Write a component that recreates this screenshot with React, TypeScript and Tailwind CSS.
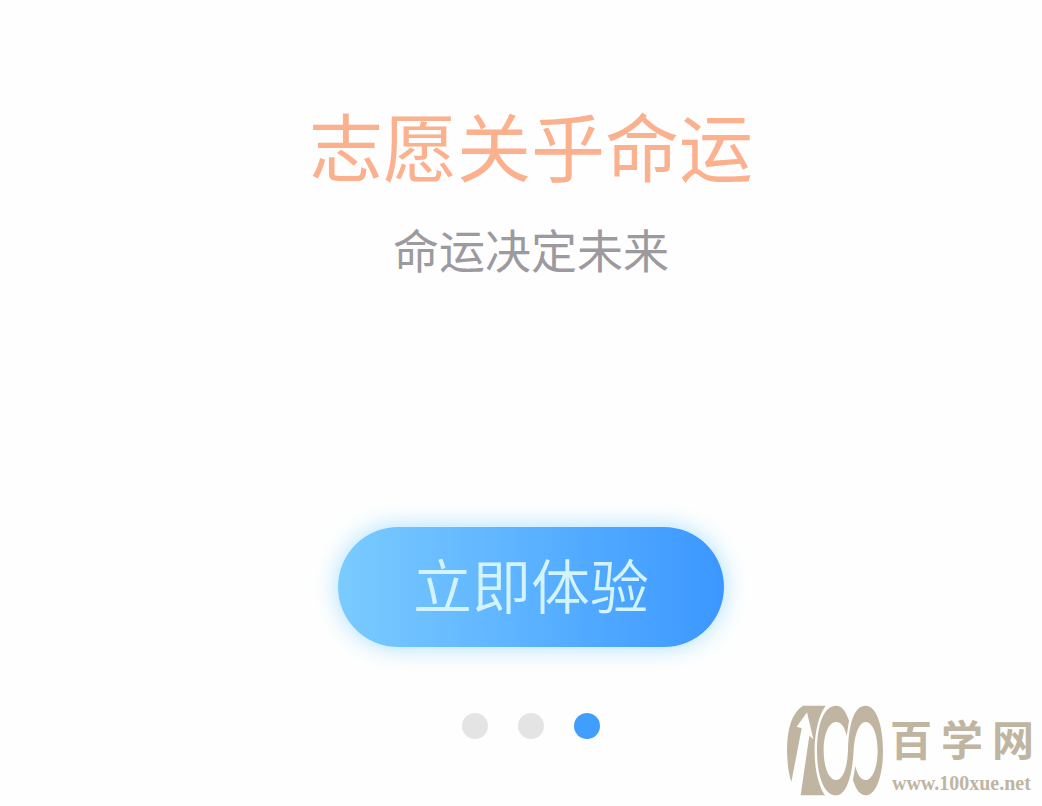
import React from "react";

const slides = ["第一页", "第二页", "第三页"];

function BrandMark(): JSX.Element {
  return (
    <svg
      className="shrink-0"
      width="96"
      height="91"
      viewBox="36 29 288 273"
      aria-hidden="true"
    >
      <g fill="#bfb5a1">
        <path d="M84 31 Q36 62 36 165 Q37 225 49 260 L80 99 L65 94 L96 51 L115 132 L103 121 L77 300 H150 C108 240 108 90 152 31 Z" />
        <path d="M183 31 C146 31 126 90 126 165 C126 240 146 300 183 300 C215 300 232 240 236 165 C239 118 252 80 272 80 C293 80 308 118 308 165 C308 215 293 254 272 254 C257 254 247 238 241 212 L234 254 C243 284 256 300 272 300 C304 300 324 240 324 165 C324 90 304 31 272 31 C240 31 222 76 219 165 C217 215 205 254 183 254 C161 254 146 215 146 165 C146 118 161 80 183 80 C200 80 210 98 215 122 L222 76 C212 46 200 31 183 31 Z" />
      </g>
    </svg>
  );
}

function Watermark(): JSX.Element {
  return (
    <a
      href="#home"
      className="absolute right-[8px] bottom-[10px] flex items-center gap-[7px] text-[#bfb5a1]"
    >
      <BrandMark />
      <span className="flex flex-col">
        <span className="flex gap-[9px] font-['Noto_Sans_CJK_SC',sans-serif] text-[42px] leading-[64px] font-bold">
          <span>百</span>
          <span>学</span>
          <span>网</span>
        </span>
        <span className="pl-[2px] font-['Liberation_Serif',serif] text-[20px] leading-[26px] font-bold">
          www.100xue.net
        </span>
      </span>
    </a>
  );
}

function App(): JSX.Element {
  const [current, setCurrent] = React.useState(2);

  return (
    <main className="relative flex min-h-screen flex-col items-center bg-[#fefefe] pt-[94px] pl-[20px] font-['Noto_Sans_CJK_SC',sans-serif]">
      <h1 className="text-[74px] leading-[100px] font-normal text-[#fbb08e]">
        志愿关乎命运
      </h1>
      <p className="mt-[22px] text-[46px] leading-[64px] text-[#9c9a9e]">
        命运决定未来
      </p>
      <button
        type="button"
        className="mt-[247px] h-[120px] rounded-full bg-linear-to-r from-[#7acbff] to-[#3b97ff] px-[75px] pb-[6px] text-[59px] leading-[114px] font-[350] text-[#d3f3ff] shadow-[0_0_24px_#a9e0ff]"
      >
        立即体验
      </button>
      <div className="mt-[66px] flex gap-[30px]">
        {slides.map((label, index) => (
          <button
            key={label}
            type="button"
            aria-label={label}
            onClick={() => setCurrent(index)}
            className={`size-[26px] rounded-full ${
              index === current ? "bg-[#409eff]" : "bg-[#e4e4e4]"
            }`}
          />
        ))}
      </div>
      <Watermark />
    </main>
  );
}

export default App;
